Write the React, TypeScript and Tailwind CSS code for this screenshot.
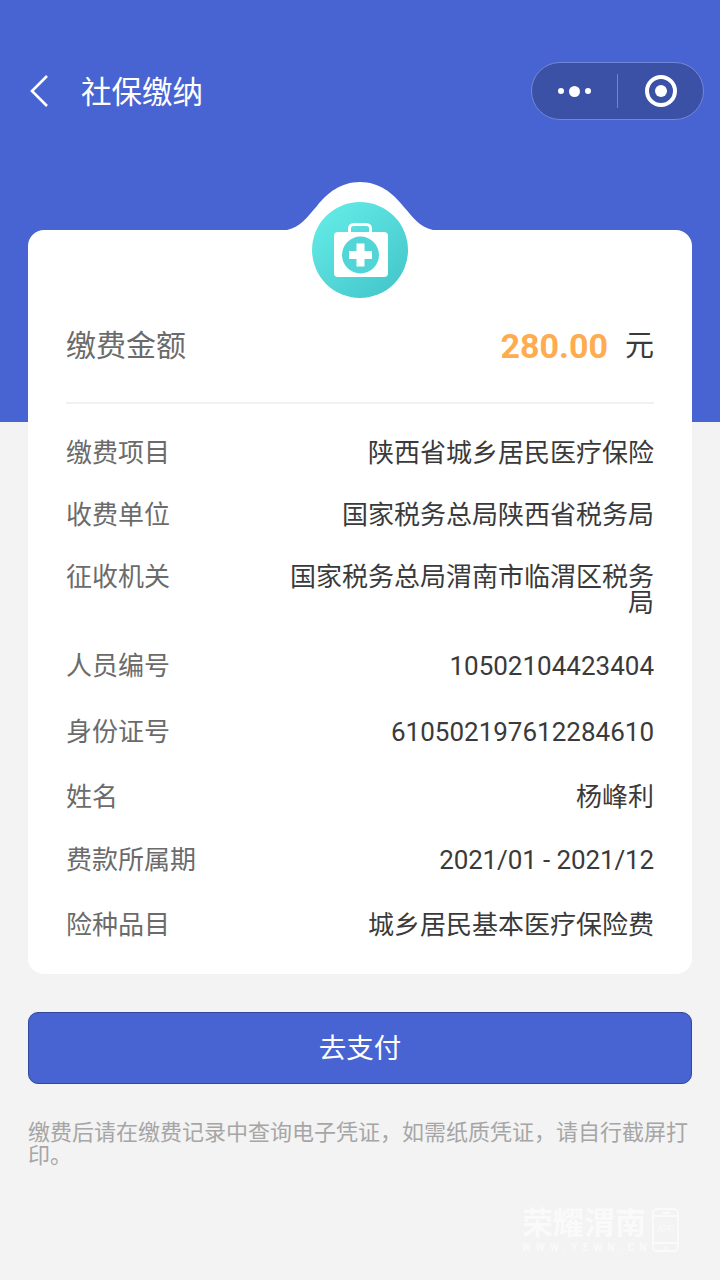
function Row({ label, value, cls, valueCls = "" }: { label: string; value: string; cls: string; valueCls?: string }) {
  return (
    <div className={`flex justify-between ${cls}`}>
      <div className="shrink-0 text-[26px] leading-[26px] text-[#6b6b6b]">{label}</div>
      <div className={`w-[370px] text-right text-[26px] leading-[26px] text-[#3a3a3a] ${valueCls}`}>{value}</div>
    </div>
  );
}

function Kit() {
  return (
    <svg viewBox="0 0 96 96" className="block w-[96px] h-[96px]">
      <defs>
        <linearGradient id="kg" x1="0.15" y1="0.1" x2="0.85" y2="0.9">
          <stop offset="0" stopColor="#62e9e5" />
          <stop offset="1" stopColor="#46c8cc" />
        </linearGradient>
      </defs>
      <circle cx="48" cy="48" r="48" fill="url(#kg)" />
      <path d="M37.500 30v-3.500a4 4 0 0 1 4-4h13a4 4 0 0 1 4 4V30" fill="none" stroke="#fff" strokeWidth="3" />
      <rect x="22" y="30" width="54" height="45" rx="4" fill="#fff" />
      <circle cx="48.500" cy="53" r="18.500" fill="#52d5d7" />
      <path d="M44.500 41.500h8v7.500h7.500v8h-7.500v7.500h-8V57H37v-8h7.500z" fill="#fff" />
    </svg>
  );
}

export default function App() {
  return (
    <div className="relative h-[1280px] w-[720px] overflow-hidden bg-[#f3f3f3] font-['Roboto','Noto_Sans_CJK_SC',sans-serif]">
      <div className="h-[422px] bg-[#4864d2] pt-[62px]">
        <div className="flex h-[58px] items-center justify-between pl-[28px] pr-[16px]">
          <div className="flex items-center">
            <svg viewBox="0 0 24 36" className="h-[36px] w-[24px]" fill="none" stroke="#fff" strokeWidth="2.600">
              <path d="M19 3 4 18l15 15" />
            </svg>
            <div className="ml-[29px] pt-[3px] text-[30.500px] leading-[40px] text-white">社保缴纳</div>
          </div>
          <div className="flex h-[58px] w-[173px] items-center rounded-full border border-[#7287d8] bg-[#3b51a6]">
            <div className="flex w-[85px] items-center justify-center gap-[5px]">
              <span className="h-[6px] w-[6px] rounded-full bg-white" />
              <span className="h-[11px] w-[11px] rounded-full bg-white" />
              <span className="h-[6px] w-[6px] rounded-full bg-white" />
            </div>
            <div className="h-[34px] w-px bg-[#6f83cf]" />
            <div className="flex flex-1 items-center justify-center pl-[1px]">
              <div className="flex h-[32px] w-[32px] items-center justify-center rounded-full border-[4px] border-white">
                <span className="h-[12px] w-[12px] rounded-full bg-white" />
              </div>
            </div>
          </div>
        </div>
      </div>

      <div className="relative mx-[28px] -mt-[192px] h-[744px] rounded-[16px] bg-white px-[38px]">
        <svg viewBox="0 0 146 48" className="absolute left-[259px] top-[-48px] h-[48px] w-[146px]">
          <path d="M0 48c14-3 20-13 30-24C40 11 54 0 73 0s33 11 43 24c10 11 16 21 30 24z" fill="#fff" />
        </svg>
        <div className="absolute left-[284px] top-[-28px]"><Kit /></div>

        <div className="flex h-[174px] items-center justify-between border-b-2 border-[#f1f1f1] pt-[60px]">
          <div className="text-[30px] leading-[40px] text-[#6b6b6b]">缴费金额</div>
          <div className="flex items-center">
            <span className="text-[34px] font-bold leading-[40px] text-[#ffab50]">280.00</span>
            <span className="ml-[17px] text-[29px] leading-[40px] text-[#3a3a3a]">元</span>
          </div>
        </div>

        <Row cls="mt-[36px]" label="缴费项目" value="陕西省城乡居民医疗保险" />
        <Row cls="mt-[36px]" label="收费单位" value="国家税务总局陕西省税务局" />
        <Row cls="mt-[36px]" label="征收机关" value="国家税务总局渭南市临渭区税务局" />
        <Row cls="mt-[37px]" label="人员编号" value="10502104423404" />
        <Row cls="mt-[40px]" label="身份证号" value="610502197612284610" />
        <Row cls="mt-[39px]" label="姓名" value="杨峰利" />
        <Row cls="mt-[37px]" label="费款所属期" value="2021/01 - 2021/12" valueCls="tracking-[-0.120px]" />
        <Row cls="mt-[39px]" label="险种品目" value="城乡居民基本医疗保险费" />
      </div>

      <div className="mx-[28px] mt-[38px] flex h-[72px] items-center justify-center rounded-[10px] border border-[#33479b] bg-[#4864d2] pt-[1px] text-[27.500px] text-white">
        去支付
      </div>

      <div className="mx-[28px] mt-[37px] text-[22px] leading-[23px] text-[#a6a6a6]">
        缴费后请在缴费记录中查询电子凭证，如需纸质凭证，请自行截屏打印。
      </div>

      <div className="absolute left-[522px] top-[1208px] flex items-start gap-[5px] text-white opacity-60">
        <div className="w-[125px]">
          <div className="text-[31px] font-bold leading-[31px] whitespace-nowrap">荣耀渭南</div>
          <div className="mt-[3px] text-[10px] font-bold leading-[11px] tracking-[5.200px] whitespace-nowrap">WWW.YEWN.CN</div>
        </div>
        <div className="relative flex h-[44px] w-[27px] flex-col items-center justify-between rounded-[5px] border-2 border-white">
          <div className="flex h-[7px] w-full items-center justify-center border-b-2 border-white">
            <span className="h-[2px] w-[8px] bg-white" />
          </div>
          <span className="text-[9px] leading-none">APP</span>
          <div className="flex h-[8px] w-full items-center justify-center border-t-2 border-white">
            <span className="h-[3px] w-[3px] rounded-full bg-white" />
          </div>
        </div>
      </div>
    </div>
  );
}
